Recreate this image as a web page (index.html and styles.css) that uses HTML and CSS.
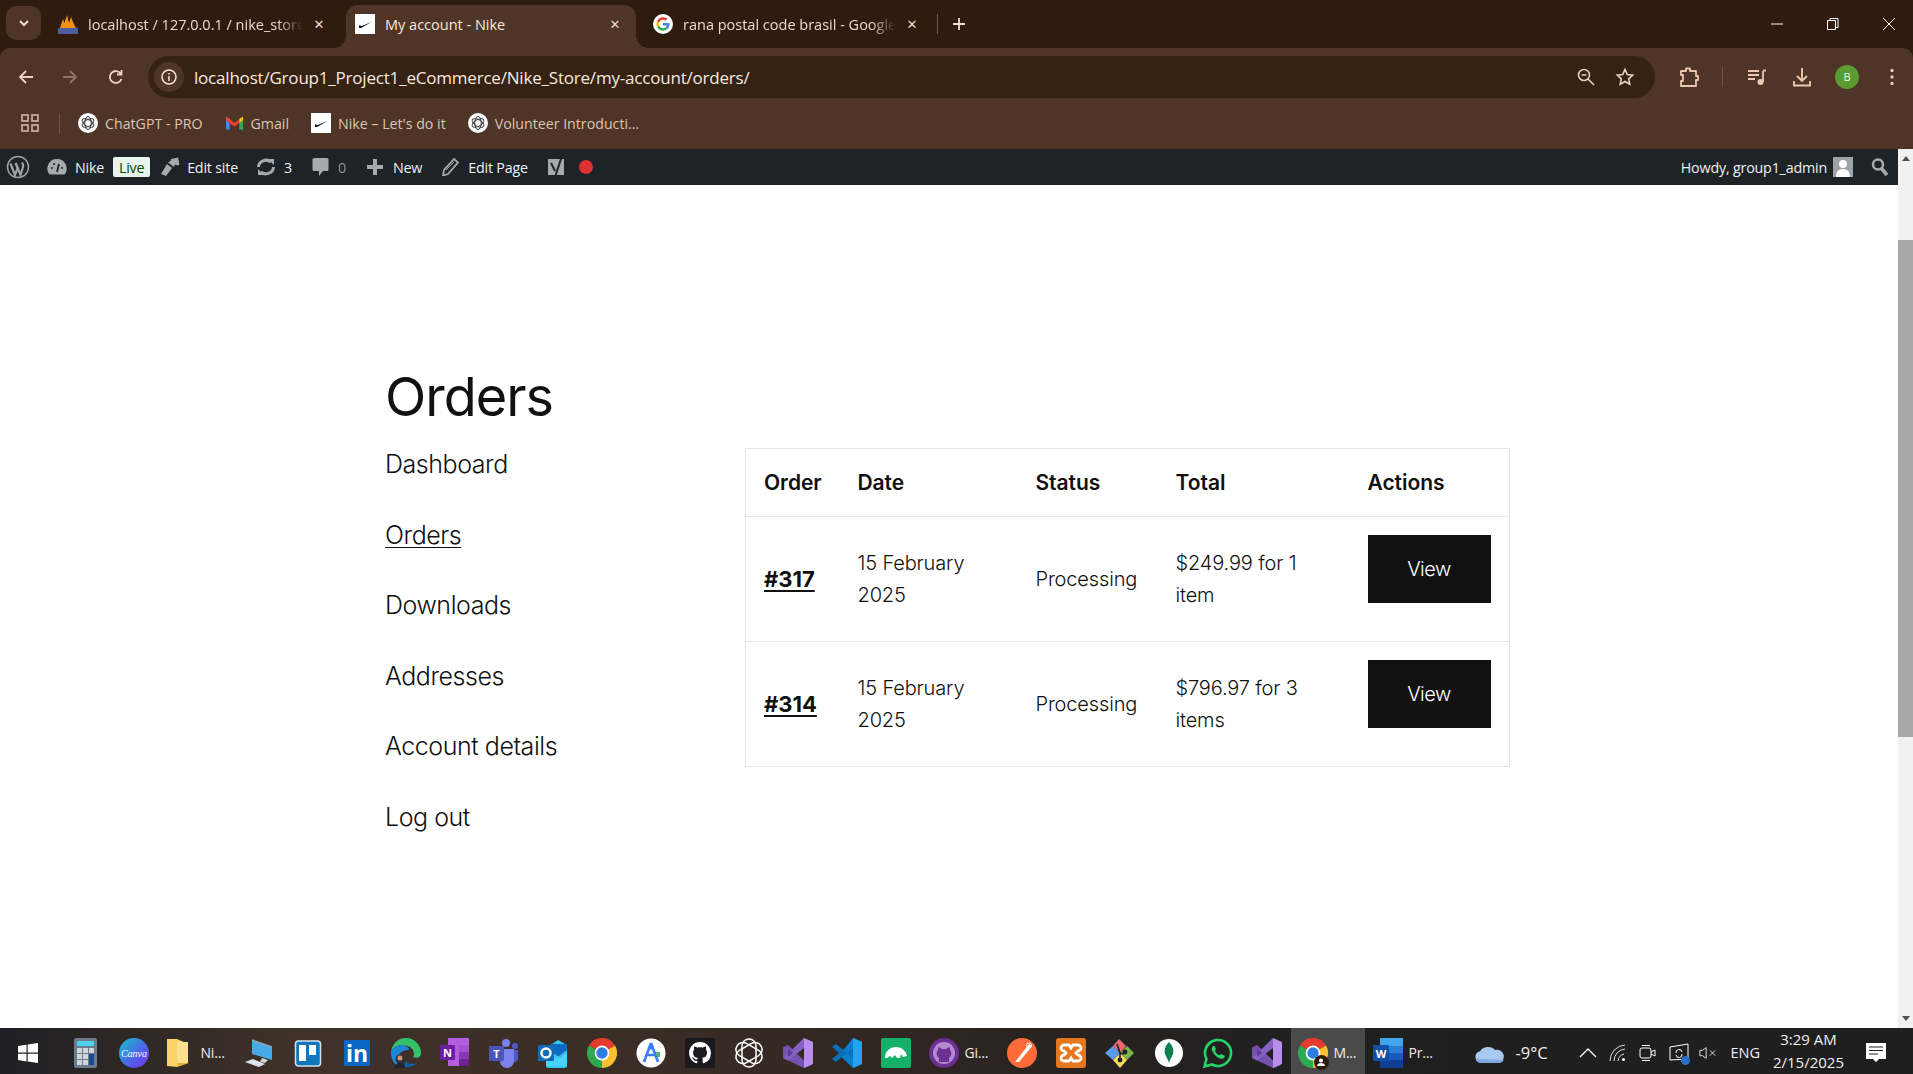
FILE: index.html
```html
<!DOCTYPE html>
<html lang="en">
<head>
<meta charset="utf-8">
<title>My account - Nike</title>
<link rel="stylesheet" href="styles.css">
</head>
<body>
<svg class="defs" aria-hidden="true">
  <symbol id="nike" viewBox="0 0 20 20"><rect width="20" height="20" fill="#fff"/><path d="M4 13.500c-.6-1 .2-2 1.400-3-.5 1.300.1 1.800 1.400 1.400L16.500 8 7 13.500c-1.500.8-2.500.8-3 0z" fill="#111"/></symbol>
  <symbol id="gpt" viewBox="0 0 20 20"><circle cx="10" cy="10" r="10" fill="#fff"/><g fill="none" stroke="#333" stroke-width="1"><ellipse cx="10" cy="10" rx="3.300" ry="6.500"/><ellipse cx="10" cy="10" rx="3.300" ry="6.500" transform="rotate(60 10 10)"/><ellipse cx="10" cy="10" rx="3.300" ry="6.500" transform="rotate(120 10 10)"/></g></symbol>
  <symbol id="chrome" viewBox="0 0 30 30"><path d="M15 15 2 7.500A15 15 0 0 1 28 7.500Z" fill="#e33b2e"/><path d="M15 15 28 7.500A15 15 0 0 1 15 30Z" fill="#fbc02d"/><path d="M15 15 15 30A15 15 0 0 1 2 7.500Z" fill="#2da94f"/><circle cx="15" cy="15" r="7.400" fill="#fff"/><circle cx="15" cy="15" r="5.700" fill="#2f7de1"/></symbol>
  <symbol id="vs" viewBox="0 0 30 30"><path d="M0 9.500 5 7l17 16.500L29 27l-8 3L0 20z" fill="#7a55b8" opacity=".95"/><path d="M21 0 30 4v22l-9 4z" fill="#b98eea"/><path d="M21 0 5 15.500 0 20l5 2.500L21 10z" fill="#8660c5"/><path d="M5 11 10 15 5 19z" fill="#5b3c96"/></symbol>
</svg>

<header class="tabstrip">
  <button class="tabmenu"><svg width="12" height="8" viewBox="0 0 12 8"><path d="M2 2l4 4 4-4" fill="none" stroke="#f1dfd2" stroke-width="2"/></svg></button>
  <div class="tab tab-first">
    <svg class="fav" viewBox="0 0 20 20"><path d="M2 14 5 5l1.500 4L9 1l2 8 2-6 2 5 3 6z" fill="#f29111"/><rect x="0" y="14" width="20" height="6" fill="#4a5f9c"/></svg>
    <span class="tab-title">localhost / 127.0.0.1 / nike_store</span>
    <span class="tab-x">✕</span>
  </div>
  <div class="tab tab-active">
    <svg class="fav"><use href="#nike"/></svg>
    <span class="tab-title">My account - Nike</span>
    <span class="tab-x">✕</span>
  </div>
  <div class="tab tab-last">
    <svg class="fav" viewBox="0 0 20 20"><circle cx="10" cy="10" r="10" fill="#fff"/><path d="M16.500 10.200c0-.5 0-.9-.1-1.300H10v2.600h3.700c-.2.9-.6 1.500-1.300 2l2 1.600c1.300-1.100 2.100-2.800 2.100-4.900z" fill="#4285f4"/><path d="M10 16.700c1.800 0 3.300-.6 4.400-1.600l-2-1.600c-.6.400-1.400.700-2.400.700-1.800 0-3.300-1.200-3.800-2.800l-2.100 1.600c1.100 2.200 3.300 3.700 5.900 3.700z" fill="#34a853"/><path d="M6.200 11.400c-.3-.9-.3-1.900 0-2.800L4.100 7c-.9 1.800-.9 4.200 0 6z" fill="#fbbc05"/><path d="M10 5.700c1 0 1.800.3 2.500 1l1.900-1.900C13.200 3.800 11.800 3.300 10 3.300 7.400 3.300 5.200 4.800 4.100 7l2.100 1.600C6.700 7 8.200 5.700 10 5.700z" fill="#ea4335"/></svg>
    <span class="tab-title">rana postal code brasil - Google</span>
    <span class="tab-x">✕</span>
  </div>
  <span class="tab-sep"></span>
  <svg class="tab-plus" width="14" height="14" viewBox="0 0 14 14"><path d="M7 1v12M1 7h12" stroke="#f1dfd2" stroke-width="1.800"/></svg>
  <div class="winctl">
    <svg width="14" height="14" viewBox="0 0 14 14"><path d="M1 7h12" stroke="#fff" stroke-width="1"/></svg>
    <svg width="14" height="14" viewBox="0 0 14 14"><path d="M1.500 3.500h8v9h-8zM4 3.500V1.500h8v9h-2.500" fill="none" stroke="#fff"/></svg>
    <svg width="14" height="14" viewBox="0 0 14 14"><path d="M1 1l12 12M13 1L1 13" stroke="#fff"/></svg>
  </div>
</header>

<nav class="toolbar">
  <svg class="nav-ic" viewBox="0 0 18 18"><path d="M16 9H3M9 3 3 9l6 6" fill="none" stroke="#ecd3c3" stroke-width="1.800"/></svg>
  <svg class="nav-ic" viewBox="0 0 18 18"><path d="M2 9h13M9 3l6 6-6 6" fill="none" stroke="#8f7566" stroke-width="1.800"/></svg>
  <svg class="nav-ic" viewBox="0 0 18 18"><path d="M14.500 11a6 6 0 1 1-.6-5.200M14.500 2v4.500H10" fill="none" stroke="#ecd3c3" stroke-width="1.800"/></svg>
  <div class="omnibox">
    <span class="info-chip"><svg width="18" height="18" viewBox="0 0 18 18"><circle cx="9" cy="9" r="7" fill="none" stroke="#f5e6da" stroke-width="1.500"/><path d="M9 8v5M9 5v1.500" stroke="#f5e6da" stroke-width="1.500"/></svg></span>
    <span class="url">localhost/Group1_Project1_eCommerce/Nike_Store/my-account/orders/</span>
    <svg class="omni-zoom" width="20" height="20" viewBox="0 0 20 20"><circle cx="8" cy="8" r="5.500" fill="none" stroke="#e6cfc0" stroke-width="1.600"/><path d="M5.500 8h5M12 12l6 6" stroke="#e6cfc0" stroke-width="1.600"/></svg>
    <svg class="omni-star" width="20" height="20" viewBox="0 0 20 20"><path d="M10 2.500l2.300 5 5.400.6-4 3.700 1.100 5.400L10 14.500l-4.800 2.700 1.100-5.400-4-3.700 5.400-.6z" fill="none" stroke="#ecd3c3" stroke-width="1.600"/></svg>
  </div>
  <svg class="tb-ext" width="20" height="22" viewBox="0 0 20 22"><path d="M2 5h5V2.500h4V5h6v5h2v4h-2v6H2v-5h2V9H2z" fill="none" stroke="#ecc7ae" stroke-width="1.800" stroke-linejoin="round"/></svg>
  <span class="tb-sep"></span>
  <svg class="tb-music" width="20" height="20" viewBox="0 0 20 20"><path d="M1 4h11M1 8h11M1 12h7" stroke="#ecc7ae" stroke-width="1.800"/><path d="M16 4v11" stroke="#ecc7ae" stroke-width="1.800"/><path d="M16 3.500h3" stroke="#ecc7ae" stroke-width="1.800"/><circle cx="13.500" cy="15" r="3" fill="#ecc7ae"/></svg>
  <svg class="tb-dl" width="20" height="22" viewBox="0 0 20 22"><path d="M10 2v13M5 10l5 5 5-5M2 15v4.500h16V15" fill="none" stroke="#ecc7ae" stroke-width="1.900"/></svg>
  <span class="avatar">B</span>
  <svg class="tb-dots" width="4" height="18" viewBox="0 0 4 18"><circle cx="2" cy="2.500" r="1.700" fill="#ecc7ae"/><circle cx="2" cy="9" r="1.700" fill="#ecc7ae"/><circle cx="2" cy="15.500" r="1.700" fill="#ecc7ae"/></svg>
</nav>

<div class="bookmarks">
  <svg class="bm-apps" width="18" height="18" viewBox="0 0 18 18"><g fill="none" stroke="#c9b0a1" stroke-width="1.700"><rect x="1" y="1" width="6" height="6"/><rect x="11" y="1" width="6" height="6"/><rect x="1" y="11" width="6" height="6"/><rect x="11" y="11" width="6" height="6"/></g></svg>
  <span class="bm-sep"></span>
  <span class="bm"><svg class="fav"><use href="#gpt"/></svg>ChatGPT - PRO</span>
  <span class="bm"><svg class="fav fav-gmail" viewBox="0 0 20 16"><path d="M1 3h4v12H1z" fill="#4285f4"/><path d="M15 3h4v12h-4z" fill="#34a853"/><path d="M15 4 19 1v4l-4 3z" fill="#fbbc05"/><path d="M1 1 10 8l5-4v4l-5 4L1 5z" fill="#ea4335"/></svg>Gmail</span>
  <span class="bm"><svg class="fav"><use href="#nike"/></svg>Nike – Let's do it</span>
  <span class="bm"><svg class="fav"><use href="#gpt"/></svg>Volunteer Introducti...</span>
</div>

<div class="viewport">
  <div class="pagecol">
    <div class="adminbar">
      <svg class="ab-wp" width="24" height="24" viewBox="0 0 24 24"><circle cx="12" cy="12" r="10.500" fill="none" stroke="#9ca2a7" stroke-width="1.500"/><path d="M4.500 8.500 9 20l2.500-7-2-5M10 8.500 14.500 20 17 12c.6-2-.2-3.300-1-4.500" fill="none" stroke="#9ca2a7" stroke-width="2.200"/></svg>
      <svg class="ab-gauge" width="20" height="18" viewBox="0 0 20 18"><path d="M10 1a9.500 9.500 0 0 0-7.500 15.500h15A9.500 9.500 0 0 0 10 1z" fill="#a7aaad"/><path d="M10 14l2-8" stroke="#1d2327" stroke-width="1.800"/><circle cx="5" cy="10" r="1" fill="#1d2327"/><circle cx="7" cy="6" r="1" fill="#1d2327"/><circle cx="15" cy="10" r="1" fill="#1d2327"/></svg>
      <span class="ab-text ab-site">Nike</span>
      <span class="ab-live">Live</span>
      <svg class="ab-brush" width="22" height="20" viewBox="0 0 22 20"><path d="M12 2l7-1.500 1.500 7-1.500 1-3-1-1 2.500-6-4.500 2.500-1.500z" fill="#a7aaad"/><path d="M8 7l5 4-6 8-5-2z" fill="#a7aaad"/></svg>
      <span class="ab-text ab-edit">Edit site</span>
      <svg class="ab-refresh" width="20" height="18" viewBox="0 0 20 18"><path d="M2.500 9a7.500 7 0 0 1 12.500-5" fill="none" stroke="#a7aaad" stroke-width="3"/><path d="M17.500 9a7.500 7 0 0 1-12.500 5" fill="none" stroke="#a7aaad" stroke-width="3"/><path d="M12 1h6v6zM8 17H2v-6z" fill="#a7aaad"/></svg>
      <span class="ab-text ab-count">3</span>
      <svg class="ab-comment" width="17" height="20" viewBox="0 0 17 20"><path d="M2 1h13a1.500 1.500 0 0 1 1.500 1.500v10A1.500 1.500 0 0 1 15 14h-4l-4 5v-5H2a1.500 1.500 0 0 1-1.500-1.500v-10A1.500 1.500 0 0 1 2 1z" fill="#a7aaad"/></svg>
      <span class="ab-text ab-zero">0</span>
      <svg class="ab-plus" width="16" height="16" viewBox="0 0 16 16"><path d="M8 0v16M0 8h16" stroke="#a7aaad" stroke-width="4"/></svg>
      <span class="ab-text ab-new">New</span>
      <svg class="ab-pencil" width="17" height="18" viewBox="0 0 17 18"><path d="M12 1l4 3.500L6 16l-5 1.500L2 12z" fill="none" stroke="#a7aaad" stroke-width="1.800"/><path d="M4 12l8-8" stroke="#a7aaad"/></svg>
      <span class="ab-text ab-page">Edit Page</span>
      <svg class="ab-yoast" width="20" height="22" viewBox="0 0 20 22"><path d="M2 3h16v16H2z" fill="#a7aaad"/><path d="M16 0 9 21H5" fill="none" stroke="#1d2327" stroke-width="2"/><path d="M5 7l4 8" stroke="#1d2327" stroke-width="2"/></svg>
      <span class="ab-dot"></span>
      <span class="ab-text ab-howdy">Howdy, group1_admin</span>
      <svg class="ab-user" width="20" height="20" viewBox="0 0 20 20"><rect width="20" height="20" fill="#9ea3a8"/><circle cx="10" cy="7" r="4" fill="#fff"/><path d="M3 20c0-6 3-8 7-8s7 2 7 8z" fill="#fff"/></svg>
      <svg class="ab-search" width="20" height="20" viewBox="0 0 20 20"><circle cx="8" cy="7.500" r="5" fill="none" stroke="#a7aaad" stroke-width="2.500"/><path d="M11 11l6 7" stroke="#a7aaad" stroke-width="3.500"/></svg>
    </div>
    <main class="page">
      <h1 class="page-title">Orders</h1>
      <div class="account">
        <ul class="acct-nav">
          <li><a>Dashboard</a></li>
          <li><a class="current">Orders</a></li>
          <li><a>Downloads</a></li>
          <li><a>Addresses</a></li>
          <li><a>Account details</a></li>
          <li><a>Log out</a></li>
        </ul>
        <table class="orders">
          <colgroup><col class="c1"><col class="c2"><col class="c3"><col class="c4"><col class="c5"></colgroup>
          <thead>
            <tr><th>Order</th><th>Date</th><th>Status</th><th>Total</th><th>Actions</th></tr>
          </thead>
          <tbody>
            <tr>
              <td><a class="order-no">#317</a></td>
              <td>15 February 2025</td>
              <td>Processing</td>
              <td>$249.99 for 1 item</td>
              <td class="act"><a class="view">View</a></td>
            </tr>
            <tr>
              <td><a class="order-no">#314</a></td>
              <td>15 February 2025</td>
              <td>Processing</td>
              <td>$796.97 for 3 items</td>
              <td class="act"><a class="view">View</a></td>
            </tr>
          </tbody>
        </table>
      </div>
    </main>
  </div>
  <div class="scrollbar">
    <span class="sb-up"></span>
    <span class="sb-thumb"></span>
    <span class="sb-down"></span>
  </div>
</div>

<footer class="taskbar">
  <div class="tb-item tb-start"><svg width="20" height="20" viewBox="0 0 20 20"><path d="M0 3l8.500-1.300v7.800H0zM9.700 1.500 20 0v9.500H9.700zM0 10.700h8.500v7.700L0 17zM9.700 10.700H20V20L9.700 18.500z" fill="#fff"/></svg></div>
  <div class="tb-item"><svg class="ti" viewBox="0 0 30 30"><rect x="4" width="23" height="30" rx="2" fill="#6c7a89"/><rect x="7" y="3" width="17" height="5" fill="#4fd0ee"/><g fill="#cfd6db"><rect x="7" y="10" width="5" height="5"/><rect x="13" y="10" width="5" height="5"/><rect x="19" y="10" width="5" height="5"/><rect x="7" y="16" width="5" height="5"/><rect x="13" y="16" width="5" height="5"/><rect x="7" y="22" width="5" height="5"/><rect x="13" y="22" width="5" height="5"/></g><rect x="19" y="16" width="5" height="11" fill="#174a96"/></svg></div>
  <div class="tb-item"><svg class="ti" viewBox="0 0 30 30"><defs><linearGradient id="cv" x1="0" y1="0" x2="1" y2="1"><stop offset="0" stop-color="#11c6c9"/><stop offset=".55" stop-color="#4a68e8"/><stop offset="1" stop-color="#7b2ff2"/></linearGradient></defs><circle cx="15" cy="15" r="15" fill="url(#cv)"/><text x="15" y="18.500" text-anchor="middle" class="canva-text">Canva</text></svg></div>
  <div class="tb-item tb-labeled tb-l-folder"><svg class="ti" viewBox="0 0 30 30"><path d="M2 1h10l7 3v22l-7 3-10-1z" fill="#f9d36b"/><path d="M12 4h8v0h3v21H12z" fill="#fbe08e"/><path d="M12 25h12l-12 4z" fill="#e8b23c"/></svg><span>Ni...</span></div>
  <div class="tb-item"><svg class="ti" viewBox="0 0 30 30"><path d="M8 2l20 7v13L8 16z" fill="#49a9e6"/><path d="M8 2l20 7" stroke="#8fa3b5" stroke-width="1.500"/><path d="M18 20l6 2-3 3-5-1z" fill="#cbd2d8"/><path d="M1 24l8-3 12 5-6 3z" fill="#dfe4e8"/></svg></div>
  <div class="tb-item"><svg class="ti" viewBox="0 0 30 30"><rect x=".5" y="3" width="25" height="25" rx="3" transform="translate(2)" fill="#0f75bd" stroke="#d6e3ea" stroke-width="1.500"/><rect x="6" y="7" width="7" height="16" fill="#fff"/><rect x="16" y="7" width="7" height="10" fill="#fff"/></svg></div>
  <div class="tb-item"><svg class="ti" viewBox="0 0 30 30"><rect x="2" y="2" width="26" height="26" rx="1" fill="#0a66c2"/><text x="15" y="24" text-anchor="middle" class="in-text">in</text></svg></div>
  <div class="tb-item"><svg class="ti" viewBox="0 0 30 30"><path d="M15 0a15 15 0 0 1 15 15c0 4-4 6-8 4 0 0 1-1 1-3 0-6-6-9-12-9C6 7 2 10 0 14 1 6 7 0 15 0z" fill="#35c06a"/><path d="M0 14c2-4 6-7 11-7 4 0 7 2 7 5-5 0-11 2-11 9 0 4 2 7 5 8C5 29 0 23 0 14z" fill="#1e86d8"/><path d="M12 29c5 1 10 0 14-4-5 2-9 1-11-2z" fill="#0d5fa8"/><circle cx="9" cy="21" r="4.500" fill="#2d3238"/><path d="M4 30c0-4 2-5 5-5s5 1 5 5z" fill="#22252b"/><circle cx="9" cy="20" r="2.500" fill="#c99a7d"/></svg></div>
  <div class="tb-item"><svg class="ti" viewBox="0 0 30 30"><path d="M8 0h21v28H8z" fill="#b35fdc"/><path d="M19 7h10v7H19z" fill="#a552cf"/><path d="M19 14h10v7H19z" fill="#8a37b3"/><path d="M19 21h10v7H19z" fill="#6c2391"/><rect y="7" width="15" height="15" rx="1" fill="#6a1f9d"/><text x="7.500" y="19" text-anchor="middle" class="tile-text">N</text></svg></div>
  <div class="tb-item"><svg class="ti" viewBox="0 0 30 30"><circle cx="17" cy="5" r="4" fill="#7b83eb"/><circle cx="26" cy="8" r="3" fill="#5059c9"/><path d="M22 12h7v9a5 5 0 0 1-7 3z" fill="#5059c9"/><path d="M11 11h14v12a7 7 0 0 1-14 0z" fill="#7b83eb"/><rect y="8" width="15" height="15" rx="1" fill="#4b53bc"/><text x="7.500" y="20" text-anchor="middle" class="tile-text">T</text></svg></div>
  <div class="tb-item"><svg class="ti" viewBox="0 0 30 30"><path d="M8 10 20 2l9 5v21a2 2 0 0 1-2 2H10a2 2 0 0 1-2-2z" fill="#36c5f0"/><path d="M14 6h15v8l-7 6-8-6z" fill="#0a6bc1"/><path d="M8 12l10 8 11-8v16H8z" fill="#50d9ff" opacity=".7"/><rect y="7" width="16" height="16" rx="1" fill="#0f6cbd"/><circle cx="8" cy="15" r="4.500" fill="none" stroke="#fff" stroke-width="2.400"/></svg></div>
  <div class="tb-item"><svg class="ti"><use href="#chrome"/></svg></div>
  <div class="tb-item"><svg class="ti" viewBox="0 0 30 30"><circle cx="15" cy="15" r="14.500" fill="#fff"/><path d="M15 5 8 24M15 5l7 19M10 17h10" fill="none" stroke="#3d7cf2" stroke-width="2.600"/><circle cx="15" cy="9" r="2.500" fill="#3d7cf2"/><path d="M20 14h4v5h-3z" fill="#48b56a"/></svg></div>
  <div class="tb-item"><svg class="ti" viewBox="-3 -3 22 22"><rect x="-3" y="-3" width="22" height="22" fill="#1b1b1f"/><path d="M8 0C3.580 0 0 3.580 0 8c0 3.540 2.290 6.530 5.470 7.590.4.070.55-.17.55-.38 0-.19-.01-.82-.01-1.490-2.010.37-2.530-.49-2.690-.94-.09-.23-.48-.94-.82-1.130-.28-.15-.68-.52-.01-.53.63-.01 1.080.58 1.230.82.72 1.210 1.870.87 2.330.66.070-.52.28-.87.51-1.070-1.780-.2-3.640-.89-3.640-3.950 0-.87.31-1.590.82-2.150-.08-.2-.36-1.020.08-2.120 0 0 .67-.21 2.200.82.64-.18 1.320-.27 2-.27.68 0 1.360.09 2 .27 1.530-1.040 2.200-.82 2.200-.82.44 1.100.16 1.920.08 2.120.51.56.82 1.270.82 2.150 0 3.070-1.870 3.750-3.650 3.950.29.25.54.73.54 1.480 0 1.070-.01 1.930-.01 2.200 0 .21.15.46.55.38A8.013 8.013 0 0 0 16 8c0-4.420-3.580-8-8-8z" fill="#fff"/></svg></div>
  <div class="tb-item"><svg class="ti" viewBox="0 0 30 30"><g fill="none" stroke="#fff" stroke-width="1.500"><rect x="8" y="1" width="14" height="28" rx="7"/><rect x="8" y="1" width="14" height="28" rx="7" transform="rotate(60 15 15)"/><rect x="8" y="1" width="14" height="28" rx="7" transform="rotate(120 15 15)"/></g></svg></div>
  <div class="tb-item"><svg class="ti"><use href="#vs"/></svg></div>
  <div class="tb-item"><svg class="ti" viewBox="0 0 30 30"><path d="M21 0 30 4v22l-9 4L6 16l7-6z" fill="#0a80cf"/><path d="M21 0 30 4v22l-9 4z" fill="#25a5ee"/><path d="M21 10 10 19l-6 5-4-3 7-6-7-6 4-3 6 5 11 9z" fill="#0b6fb8"/></svg></div>
  <div class="tb-item"><svg class="ti" viewBox="0 0 30 30"><rect width="30" height="30" rx="2" fill="#15b06a"/><path d="M4 20c0-7 5-11 11-11 6 0 10 4 11 9l-4 1-2-3-1 4h-3l-2-3-3 3-2-2-3 2z" fill="#fff"/></svg></div>
  <div class="tb-item tb-labeled tb-l-gh"><svg class="ti" viewBox="0 0 30 30"><circle cx="15" cy="15" r="15" fill="#6e2f94"/><circle cx="15" cy="15" r="11" fill="#b28cd0"/><path d="M10 24v-4c-3-2-3-6-1-8 0-2 0-3 1-3l3 2h4l3-2c1 0 1 1 1 3 2 2 2 6-1 8v4z" fill="#6e2f94"/></svg><span>Gi...</span></div>
  <div class="tb-item"><svg class="ti" viewBox="0 0 30 30"><circle cx="15" cy="15" r="15" fill="#ff6c37"/><path d="M8 24 19 10l3-4 3 2-3 4-10 12z" fill="#fff"/><circle cx="22" cy="7.500" r="2.500" fill="none" stroke="#fff"/></svg></div>
  <div class="tb-item"><svg class="ti" viewBox="0 0 30 30"><rect width="30" height="30" rx="3" fill="#e5771f"/><path d="M8 7h5l2 3 2-3h5a3 3 0 0 1 0 6l-2 2 2 2a3 3 0 0 1 0 6h-5l-2-3-2 3H8a3 3 0 0 1 0-6l2-2-2-2a3 3 0 0 1 0-6z" fill="none" stroke="#fff" stroke-width="2.800"/></svg></div>
  <div class="tb-item"><svg class="ti" viewBox="0 0 30 30"><path d="M15 15 8 8l6-7 7 7z" fill="#f0666e"/><path d="M15 15l7-7 7 7-7 7z" fill="#7ab648"/><path d="M15 15l7 7-7 8-7-8z" fill="#f5dc5c"/><path d="M15 15 8 22l-8-7 8-7z" fill="#5a9af2"/><path d="M12 6l3 9 4 1M15 15v7" fill="none" stroke="#222" stroke-width="1.600"/><circle cx="20" cy="14" r="2.400" fill="#222"/><circle cx="15" cy="22" r="2.400" fill="#222"/></svg></div>
  <div class="tb-item"><svg class="ti" viewBox="0 0 30 30"><circle cx="15" cy="15" r="14" fill="#fff"/><path d="M15 4c4 4 5 8 4 12-1 3-3 5-4 9-1-4-3-6-4-9-1-4 0-8 4-12z" fill="#12804e"/></svg></div>
  <div class="tb-item"><svg class="ti" viewBox="0 0 30 30"><path d="M1.500 28.500 3.500 21A13 13 0 1 1 9 26.500z" fill="none" stroke="#25d366" stroke-width="2.600"/><path d="M10 8c-2 2-1.500 5 1.500 8.500S18 22 21 20c1-1 1-2 .5-2.500L18 16c-1 1-1.500 1.500-2 1-2-1-3-2-4-4 0-.5.500-1 1-2l-1.500-3c-.5-.5-1-.5-1.500 0z" fill="#25d366"/></svg></div>
  <div class="tb-item tb-vs2"><svg class="ti"><use href="#vs"/></svg></div>
  <div class="tb-item tb-labeled tb-active"><span class="ti-wrap"><svg class="ti"><use href="#chrome"/></svg><span class="profile-badge"><svg width="8" height="8" viewBox="0 0 8 8"><circle cx="4" cy="2.500" r="2" fill="#fff"/><path d="M0 8c0-2 2-3 4-3s4 1 4 3z" fill="#fff"/></svg></span></span><span>M...</span></div>
  <div class="tb-item tb-labeled tb-l-word"><svg class="ti" viewBox="0 0 30 30"><rect x="7" width="23" height="30" rx="1" fill="#185abd"/><rect x="7" width="23" height="8" fill="#41a5ee"/><rect x="7" y="8" width="23" height="7" fill="#2b7cd3"/><rect x="7" y="22" width="23" height="8" fill="#103f91"/><rect y="7" width="16" height="16" rx="1" fill="#0f4fa8"/><text x="8" y="19.500" text-anchor="middle" class="tile-text">W</text></svg><span>Pr...</span></div>
  <div class="tray">
    <div class="tr-weather"><svg width="30" height="20" viewBox="0 0 30 20"><path d="M6 20a6 6 0 0 1-1-11.800A9 8 0 0 1 20 7a6.500 6.500 0 0 1 4 13z" fill="#a9c8f2"/><path d="M1 16a6 6 0 0 0 5 4h18a6.500 6.500 0 0 0 5-3z" fill="#7ea9e6"/></svg><span>-9°C</span></div>
    <svg class="tr-ic" width="18" height="10" viewBox="0 0 18 10"><path d="M1 9l8-8 8 8" fill="none" stroke="#fff" stroke-width="1.300"/></svg>
    <svg class="tr-ic" width="18" height="18" viewBox="0 0 18 18"><path d="M1 17A16 16 0 0 1 16 1M5 17A12 12 0 0 1 16 5M9 17a8 8 0 0 1 6-7" fill="none" stroke="#ddd" stroke-width="1"/><circle cx="14.500" cy="15.500" r="1.500" fill="#fff"/></svg>
    <svg class="tr-ic" width="18" height="20" viewBox="0 0 18 20"><rect x="1" y="5" width="11" height="10" rx="2" fill="none" stroke="#fff"/><path d="M12 9l4-2v6l-4-2M3 2.500h8M3 17.500h8" fill="none" stroke="#fff"/></svg>
    <span class="tr-cast"><svg width="20" height="20" viewBox="0 0 20 20"><path d="M1 4l18-3v15l-18 1z" fill="none" stroke="#fff" stroke-width="1"/><path d="M7 10a3 3 0 0 1 6-1M13 11a3 3 0 0 1-6 1" fill="none" stroke="#fff"/></svg><span class="tr-dot"></span></span>
    <svg class="tr-ic" width="20" height="14" viewBox="0 0 20 14"><path d="M1 4h3l4-3v12L4 10H1zM12 4l6 6M18 4l-6 6" fill="none" stroke="#eee"/></svg>
    <span class="tr-lang">ENG</span>
    <span class="tr-clock"><span>3:29 AM</span><span>2/15/2025</span></span>
    <svg class="tr-notif" width="20" height="20" viewBox="0 0 20 20"><path d="M0 0h20v16h-7l-3 3-3-3H0z" fill="#fff"/><path d="M3 4h14M3 7.500h14M3 11h9" stroke="#222"/></svg>
  </div>
</footer>
</body>
</html>
```
FILE: styles.css
```css
* { box-sizing: border-box; }
html, body { margin: 0; height: 100%; overflow: hidden; }
body {
  display: flex;
  flex-direction: column;
  height: 1074px;
  background: #2f1c0e;
  font-family: "Inter", "Liberation Sans", sans-serif;
  color: #111;
}
.defs { position: absolute; width: 0; height: 0; }

/* Browser chrome */
.tabstrip {
  height: 48px;
  flex: none;
  background: #2f1c0e;
  display: flex;
  align-items: flex-end;
  font: 14px "Open Sans", sans-serif;
  color: #ecd9cc;
  position: relative;
  z-index: 1;
}
.tabmenu {
  width: 35px; height: 34px;
  margin: 0 0 8px 6px;
  border: 0; border-radius: 10px;
  background: #4f3527;
  display: flex; align-items: center; justify-content: center;
}
.tab {
  display: flex;
  align-items: center;
  height: 43px;
  padding: 0 13px 5px 17px;
  width: 290px;
  position: relative;
}
.tab-first { width: 305px; padding-right: 19px; }
.tab-active {
  background: #4f3527;
  border-radius: 12px 12px 0 0;
  color: #f6e9df;
  padding: 0 13px 5px 9px;
}
.tab-active::before, .tab-active::after {
  content: "";
  position: absolute;
  bottom: 0;
  width: 12px; height: 12px;
  background: radial-gradient(circle at 0 0, transparent 11.500px, #4f3527 12px);
}
.tab-active::before { left: -12px; }
.tab-active::after { right: -12px; background: radial-gradient(circle at 100% 0, transparent 11.500px, #4f3527 12px); }
.tab-last { padding: 0 11px 5px 17px; width: 295px; }
.fav { width: 20px; height: 20px; flex: none; }
.tab .fav { margin-right: 10px; }
.tab-title {
  flex: 1;
  min-width: 0;
  white-space: nowrap;
  overflow: hidden;
  font-size: 14.500px;
  -webkit-mask-image: linear-gradient(90deg, #000 88%, transparent);
  mask-image: linear-gradient(90deg, #000 88%, transparent);
}
.tab-active .tab-title { -webkit-mask-image: none; mask-image: none; }
.tab-x { width: 16px; margin-left: 8px; font-size: 13px; text-align: center; color: #ecd9cc; font-family: "DejaVu Sans", sans-serif; }
.tab-sep { width: 1px; height: 20px; margin: 0 0 14px 6px; background: #6e5445; }
.tab-plus { margin: 0 0 17px 14px; }
.winctl {
  margin-left: auto;
  display: flex;
  gap: 42px;
  padding: 0 17px 17px 0;
}

.toolbar {
  height: 58px;
  flex: none;
  background: #4f3527;
  border-radius: 10px 10px 0 0;
  display: flex;
  align-items: center;
  padding: 0 0 0 17px;
}
.nav-ic { width: 18px; height: 18px; flex: none; margin-right: 26px; }
.nav-ic:nth-of-type(3) { margin-left: 2px; margin-right: 25px; }
.omnibox {
  width: 1507px; height: 42px;
  flex: none;
  margin-left: -2px;
  border-radius: 21px;
  background: #362213;
  display: flex;
  align-items: center;
  padding-left: 6px;
}
.info-chip {
  width: 30px; height: 30px; flex: none;
  border-radius: 50%;
  background: #4f3527;
  display: flex; align-items: center; justify-content: center;
}
.url {
  margin-left: 10px;
  font: 17px "Open Sans", sans-serif;
  letter-spacing: -.2px;
  color: #f6e9df;
}
.omni-zoom { margin-left: auto; margin-right: 19px; }
.omni-star { margin-right: 20px; }
.tb-ext { margin-left: 24px; }
.tb-sep { width: 1px; height: 20px; background: #6e5445; margin-left: 23px; }
.tb-music { margin-left: 24px; }
.tb-dl { margin-left: 25px; }
.avatar {
  width: 24px; height: 24px;
  margin-left: 23px;
  border-radius: 50%;
  background: #5c9a32;
  color: #e9f5e0;
  font: 11px/24px "Open Sans", sans-serif;
  text-align: center;
}
.tb-dots { margin-left: 31px; }

.bookmarks {
  height: 43px;
  flex: none;
  background: #4f3527;
  display: flex;
  align-items: center;
  padding: 0 0 9px 21px;
  font: 14.200px "Open Sans", sans-serif;
  color: #dcc5b6;
}
.bm-sep { width: 1px; height: 20px; background: #6e5445; margin: 0 18px 0 20px; }
.bm { display: flex; align-items: center; gap: 7px; margin-right: 22px; white-space: nowrap; }
.fav-gmail { height: 16px; width: 19px; }

/* Viewport */
.viewport { flex: 1; min-height: 0; display: flex; }
.pagecol { flex: 1; min-width: 0; display: flex; flex-direction: column; background: #fff; }
.scrollbar {
  width: 15px; flex: none;
  background: #f1f1f1;
  display: flex; flex-direction: column; align-items: center;
}
.sb-up, .sb-down {
  width: 0; height: 0;
  border-left: 4.500px solid transparent;
  border-right: 4.500px solid transparent;
}
.sb-up { border-bottom: 5px solid #505050; margin-top: 7px; }
.sb-down { border-top: 5px solid #505050; margin-top: auto; margin-bottom: 7px; }
.sb-thumb { width: 15px; height: 497px; margin-top: 79px; background: #a8a8a8; }

.adminbar {
  height: 36px; flex: none;
  background: #1d2327;
  display: flex; align-items: center;
  padding-left: 6px;
  font: 14.300px "Open Sans", sans-serif;
  letter-spacing: -.2px;
  color: #f0f0f1;
}
.ab-gauge { margin-left: 17px; }
.ab-site { margin-left: 8px; }
.ab-live {
  margin-left: 9px;
  width: 37px; height: 20px;
  border-radius: 2px;
  background: #e7f5ec;
  color: #00450c;
  text-align: center;
  line-height: 21px;
}
.ab-brush { margin-left: 9px; }
.ab-edit { margin-left: 6px; }
.ab-refresh { margin-left: 18px; }
.ab-count { margin-left: 8px; }
.ab-comment { margin-left: 20px; }
.ab-zero { margin-left: 9px; color: #8d9296; }
.ab-plus { margin-left: 21px; }
.ab-new { margin-left: 10px; }
.ab-pencil { margin-left: 20px; }
.ab-page { margin-left: 9px; }
.ab-yoast { margin-left: 18px; }
.ab-dot { width: 14px; height: 14px; border-radius: 50%; background: #dc3232; margin-left: 13px; }
.ab-howdy { margin-left: auto; }
.ab-user { margin-left: 6px; }
.ab-search { margin: 0 8px 0 17px; }

.page { flex: 1; padding: 177px 0 0 385px; }
.page-title {
  margin: 0;
  font-size: 54px;
  line-height: 70px;
  font-weight: 400;
  letter-spacing: -1px;
  color: #111;
}
.account { display: flex; align-items: flex-start; margin-top: 16px; }
.acct-nav {
  list-style: none;
  margin: 0;
  padding: 0;
  width: 360px;
  flex: none;
  font-size: 25px;
  font-weight: 300;
  letter-spacing: -.45px;
}
.acct-nav li { height: 70.600px; line-height: 32px; }
.acct-nav a { color: #111; }
.acct-nav .current { text-decoration: underline; text-underline-offset: 3px; text-decoration-thickness: 1px; }

.orders {
  width: 764px;
  table-layout: fixed;
  border-collapse: collapse;
  border: 1px solid #e5e5e5;
  font-size: 20px;
  line-height: 32px;
  font-weight: 300;
  letter-spacing: -.15px;
}
.c1 { width: 94px; } .c2 { width: 178px; } .c3 { width: 140px; } .c4 { width: 192px; } .c5 { width: 160px; }
.orders th, .orders td {
  padding: 0 18px;
  text-align: left;
  border-top: 1px solid #e5e5e5;
  vertical-align: middle;
}
.orders th { height: 68px; font-size: 21px; font-weight: 600; letter-spacing: -.05px; }
.orders td { height: 125px; }
.order-no { font-size: 22px; font-weight: 700; color: #111; text-decoration: underline; text-underline-offset: 3px; letter-spacing: 0; }
.orders .act { vertical-align: top; padding-top: 18px; }
.view {
  display: flex;
  align-items: center;
  justify-content: center;
  width: 123px; height: 68px;
  background: #111;
  color: #fff;
  letter-spacing: -.5px;
}

/* Taskbar */
.taskbar {
  height: 46px; flex: none;
  display: flex; align-items: center;
  background: linear-gradient(90deg, #1f1f24 0, #2f2925 140px, #40322a 300px, #3a2d25 650px, #2d2521 950px, #222020 1200px, #1f1f1f 1500px);
  font: 14px "Open Sans", sans-serif;
  color: #eee;
}
.tb-item {
  width: 49px; height: 46px; flex: none;
  display: flex; align-items: center; justify-content: center;
  padding-top: 3px;
}
.tb-start { width: 60.500px; padding-right: 5px; }
.ti { width: 30px; height: 30px; flex: none; }
.ti-wrap { position: relative; display: flex; flex: none; }
.tb-labeled { justify-content: flex-start; width: 76px; gap: 6px; padding-left: 7px; letter-spacing: -.2px; }
.tb-l-folder { padding-left: 6px; }
.tb-l-gh { width: 77px; padding-left: 8px; }
.tb-vs2 { width: 49px; margin-right: -1px; }
.tb-active { width: 74px; background: #4a4a4a; padding-left: 7px; }
.tb-l-word { padding-left: 8px; }
.profile-badge {
  position: absolute; right: -1px; bottom: -2px;
  width: 15px; height: 15px;
  border-radius: 50%;
  background: #2f1c0e;
  display: flex; align-items: center; justify-content: center;
}
.canva-text { font: italic 10px "Liberation Serif", serif; fill: #fff; }
.in-text { font: 700 23px "Open Sans", sans-serif; fill: #fff; }
.tile-text { font: 700 11px "Open Sans", sans-serif; fill: #fff; }

.tray { flex: 1; display: flex; align-items: center; padding-top: 3px; font-size: 14px; }
.tr-weather { display: flex; align-items: center; gap: 11px; margin-left: 34px; width: 104px; font-size: 16.500px; }
.tr-ic { flex: none; width: 18px; }
.tray .tr-ic { margin-right: 12px; }
.tr-cast { position: relative; display: flex; margin-right: 10px; }
.tr-dot {
  position: absolute; right: -1px; bottom: -2px;
  width: 9px; height: 9px;
  border-radius: 50%;
  background: #2a70c8;
}
.tr-lang { margin-left: 2px; width: 38px; font-size: 14.500px; }
.tr-clock {
  display: flex; flex-direction: column; align-items: center;
  width: 80px;
  font-size: 15px; line-height: 23px;
  margin-top: -3px;
}
.tr-notif { margin-left: 17px; }
```
